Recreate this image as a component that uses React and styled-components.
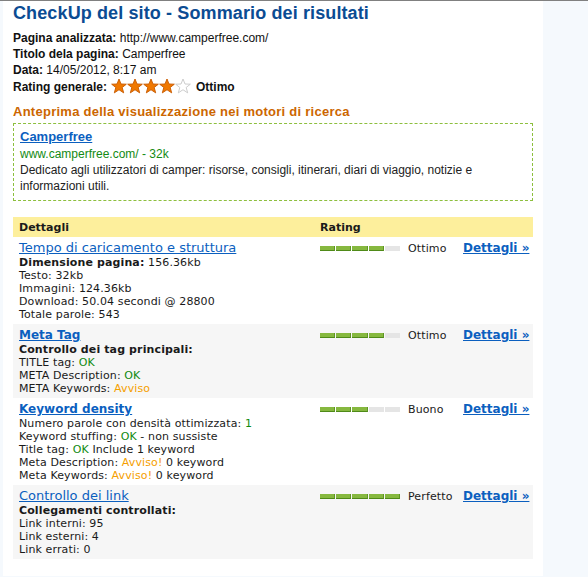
import React from "react";
import styled, { createGlobalStyle } from "styled-components";

const Global = createGlobalStyle`
    html, body {
        margin: 0;
        padding: 0;
        background: #f5f9fd;
    }
    body {
        border-top: 1px solid #808080;
    }
`;

const Page = styled.div`
    width: 520px;
    margin-left: 3px;
    padding: 0 10px 17px;
    background: #fff;
    font-family: "Liberation Sans", Arial, sans-serif;
    color: #111;
`;

const Title = styled.h1`
    margin: 0;
    padding-top: 1px;
    font-size: 18px;
    line-height: 22px;
    font-weight: bold;
    letter-spacing: 0.12px;
    color: #0b4c93;
`;

const Info = styled.div`
    margin-top: 6px;
    font-size: 12px;
    line-height: 16px;
`;

const Label = styled.b``;

const Stars = styled.span`
    display: inline-flex;
    gap: 0;
    vertical-align: -3px;
    margin: 0 5px 0 4px;
`;

const Section = styled.h2`
    margin: 9px 0 3px;
    font-size: 13px;
    line-height: 16px;
    font-weight: bold;
    letter-spacing: 0.26px;
    color: #cc6600;
`;

const Preview = styled.div`
    border: 1px dashed #8dbf3e;
    padding: 4px 6px 6px;
    font-size: 12px;
    line-height: 16px;
    color: #222;
`;

const PreviewTitle = styled.a`
    display: block;
    font-size: 13px;
    line-height: 18px;
    font-weight: bold;
    color: #0b5fbf;
    text-decoration: underline;
`;

const PreviewUrl = styled.div`
    color: #138a13;
`;

const Table = styled.div`
    margin-top: 16px;
    font-family: "DejaVu Sans", Verdana, sans-serif;
    font-size: 11px;
    letter-spacing: 0.12px;
    color: #1a1a1a;
`;

const Row = styled.div`
    display: flex;
    align-items: flex-start;
    padding: 3px 4px 3px 6px;
    background: ${(p) => (p.$alt ? "#f6f6f6" : "#fff")};
`;

const HeadRow = styled(Row)`
    background: #fdef9c;
    height: 20px;
    padding: 0 4px 0 6px;
    align-items: center;
    font-weight: bold;
    letter-spacing: 0;
`;

const Main = styled.div`
    width: 301px;
    flex-shrink: 0;
    line-height: 13px;
`;

const RatingCell = styled.div`
    width: 143px;
    flex-shrink: 0;
    display: flex;
    align-items: center;
    height: 16px;
`;

const ItemLink = styled.a`
    display: block;
    font-size: ${(p) => (p.$bold ? "12px" : "13px")};
    line-height: 16px;
    letter-spacing: 0;
    color: #0b5fbf;
    text-decoration: underline;
    font-weight: ${(p) => (p.$bold ? "bold" : "normal")};
`;

const Bar = styled.div`
    display: flex;
    gap: 1px;
    width: 80px;
    margin-right: 8px;
`;

const Seg = styled.div`
    flex: 1;
    height: 5px;
    box-sizing: border-box;
    background: ${(p) => (p.$on ? "#86b83f" : "#e5e5e5")};
    border-bottom: 1px solid ${(p) => (p.$on ? "#4f8a18" : "#e5e5e5")};
    border-right: 1px solid ${(p) => (p.$on ? "#5f9524" : "#e5e5e5")};
`;

const DetailLink = styled.a`
    font-size: 12px;
    line-height: 16px;
    font-weight: bold;
    letter-spacing: 0;
    color: #0b5fbf;
    text-decoration: underline;
    white-space: nowrap;
`;

const Ok = styled.span`
    color: #118a11;
`;

const Warn = styled.span`
    color: #f5a000;
`;

const Star = ({ on }) => (
    <svg width="16" height="16" viewBox="0 0 24 24">
        <polygon
            points="12,1.5 15,9 23,9.3 16.8,14.2 19,22.3 12,17.6 5,22.3 7.2,14.2 1,9.3 9,9"
            fill={on ? "#f07800" : "#fff"}
            stroke={on ? "#c85a00" : "#c8c8c8"}
            strokeWidth="1.4"
        />
    </svg>
);

const Rating = ({ value, label }) => (
    <RatingCell>
        <Bar>
            {[0, 1, 2, 3, 4].map((i) => (
                <Seg key={i} $on={i < value} />
            ))}
        </Bar>
        {label}
    </RatingCell>
);

const rows = [
    {
        title: "Tempo di caricamento e struttura",
        value: 4,
        label: "Ottimo",
        lines: [
            <>
                <b>Dimensione pagina:</b> 156.36kb
            </>,
            "Testo: 32kb",
            "Immagini: 124.36kb",
            "Download: 50.04 secondi @ 28800",
            "Totale parole: 543",
        ],
    },
    {
        title: "Meta Tag",
        bold: true,
        value: 4,
        label: "Ottimo",
        lines: [
            <b>Controllo dei tag principali:</b>,
            <>
                TITLE tag: <Ok>OK</Ok>
            </>,
            <>
                META Description: <Ok>OK</Ok>
            </>,
            <>
                META Keywords: <Warn>Avviso</Warn>
            </>,
        ],
    },
    {
        title: "Keyword density",
        bold: true,
        value: 3,
        label: "Buono",
        lines: [
            <>
                Numero parole con densità ottimizzata: <Ok>1</Ok>
            </>,
            <>
                Keyword stuffing: <Ok>OK</Ok> - non sussiste
            </>,
            <>
                Title tag: <Ok>OK</Ok> Include 1 keyword
            </>,
            <>
                Meta Description: <Warn>Avviso!</Warn> 0 keyword
            </>,
            <>
                Meta Keywords: <Warn>Avviso!</Warn> 0 keyword
            </>,
        ],
    },
    {
        title: "Controllo dei link",
        value: 5,
        label: "Perfetto",
        lines: [
            <b>Collegamenti controllati:</b>,
            "Link interni: 95",
            "Link esterni: 4",
            "Link errati: 0",
        ],
    },
];

export default function App() {
    return (
        <Page>
            <Global />
            <Title>CheckUp del sito - Sommario dei risultati</Title>
            <Info>
                <div>
                    <Label>Pagina analizzata:</Label> http://www.camperfree.com/
                </div>
                <div>
                    <Label>Titolo dela pagina:</Label> Camperfree
                </div>
                <div>
                    <Label>Data:</Label> 14/05/2012, 8:17 am
                </div>
                <div>
                    <Label>Rating generale:</Label>
                    <Stars>
                        {[1, 1, 1, 1, 0].map((on, i) => (
                            <Star key={i} on={on} />
                        ))}
                    </Stars>
                    <Label>Ottimo</Label>
                </div>
            </Info>
            <Section>Anteprima della visualizzazione nei motori di ricerca</Section>
            <Preview>
                <PreviewTitle href="#">Camperfree</PreviewTitle>
                <PreviewUrl>www.camperfree.com/ - 32k</PreviewUrl>
                <div>
                    Dedicato agli utilizzatori di camper: risorse, consigli,
                    itinerari, diari di viaggio, notizie e informazioni utili.
                </div>
            </Preview>
            <Table>
                <HeadRow>
                    <Main>Dettagli</Main>
                    <div>Rating</div>
                </HeadRow>
                {rows.map((r, i) => (
                    <Row key={r.title} $alt={i % 2 === 1}>
                        <Main>
                            <ItemLink href="#" $bold={r.bold}>
                                {r.title}
                            </ItemLink>
                            {r.lines.map((l, j) => (
                                <div key={j}>{l}</div>
                            ))}
                        </Main>
                        <Rating value={r.value} label={r.label} />
                        <DetailLink href="#">Dettagli »</DetailLink>
                    </Row>
                ))}
            </Table>
        </Page>
    );
}
